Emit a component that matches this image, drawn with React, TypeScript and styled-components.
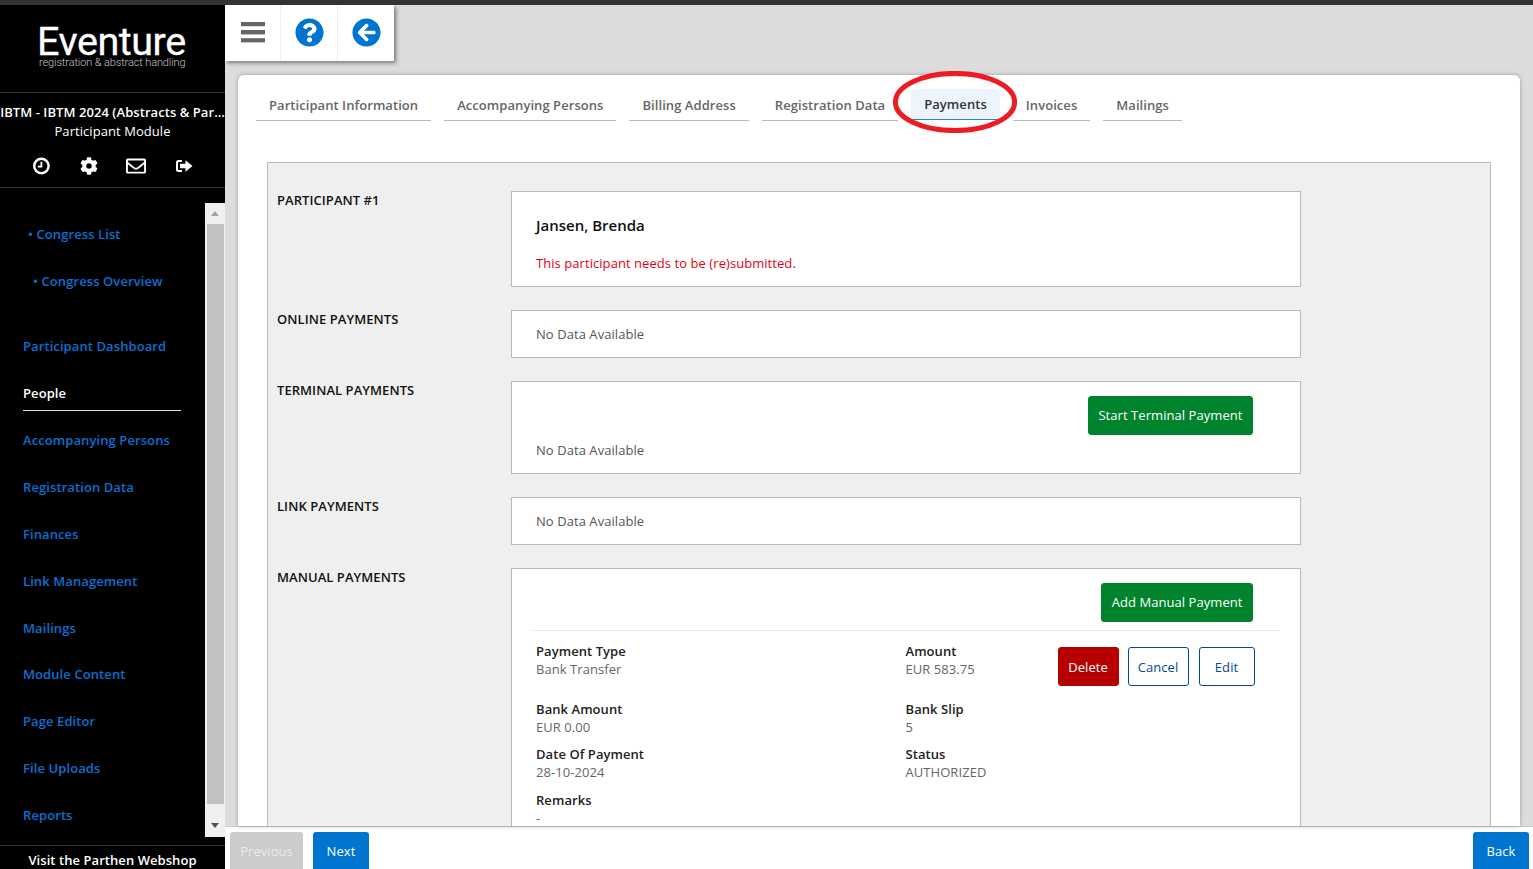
import React from "react";
import styled, { createGlobalStyle } from "styled-components";
import { FaQuestionCircle, FaArrowCircleLeft, FaCog, FaRegEnvelope } from "react-icons/fa";

const Global = createGlobalStyle`
  html, body { margin: 0; padding: 0; height: 100%; overflow: hidden; }
  body { font-family: "Open Sans", "Liberation Sans", sans-serif; font-size: 13px; letter-spacing: .06px; color: #222; background: #ddd; }
  * { box-sizing: border-box; }
`;

const Page = styled.div`
  height: 869px; display: flex; border-top: 5px solid #333; background: #dcdcdc; overflow: hidden;
`;
const Sidebar = styled.aside`
  width: 225px; flex: none; background: #000; color: #fff; display: flex; flex-direction: column;
`;
const Logo = styled.div`
  height: 88px; flex: none; border-bottom: 1px solid #333; padding: 21px 0 0 39px; display: flex; flex-direction: column;
`;
const LogoName = styled.div`
  font-family: Roboto, sans-serif; font-size: 39.5px; line-height: 31px; letter-spacing: -0.45px; color: #fff; margin-left: -2px; -webkit-text-stroke: .3px #fff;
`;
const LogoTag = styled.div`
  font-family: Roboto, sans-serif; font-weight: 300; font-size: 11px; line-height: 12px; color: #c4c4c4; letter-spacing: -0.12px;
`;
const EventBlock = styled.div`
  height: 95px; flex: none; border-bottom: 1px solid #333; padding-top: 10px; text-align: center;
`;
const EventName = styled.div` font-weight: 600; line-height: 19px; white-space: nowrap; `;
const ModuleName = styled.div` line-height: 19px; `;
const QuickIcons = styled.div`
  display: flex; justify-content: center; align-items: center; gap: 27.5px; margin-top: 15px; height: 20px; padding-right: .5px;
  svg { display: block; width: 20px; }
`;
const NavArea = styled.div` margin-top: 15px; height: 634px; flex: none; display: flex; `;
const NavList = styled.nav` flex: 1; padding-top: 8px; min-width: 0; `;
const NavItem = styled.a<{ $indent?: number; $gapAfter?: number; $active?: boolean }>`
  display: block; height: 47px; line-height: 47px; padding-left: ${p => p.$indent ?? 23}px; font-weight: 600; white-space: nowrap; letter-spacing: .09px;
  color: ${p => (p.$active ? "#fff" : "#0a6fd0")};
  margin-bottom: ${p => p.$gapAfter ?? 0}px;
  position: relative;
  ${p => p.$active && `&::after { content: ""; position: absolute; left: 23px; width: 158px; bottom: 6px; height: 1px; background: #ddd; }`}
`;
const Track = styled.div`
  width: 20px; flex: none; background: #f0f0f0; display: flex; flex-direction: column; align-items: center; padding-bottom: 1px;
`;
const Arrow = styled.div<{ $down?: boolean }>`
  height: 21px; flex: none; display: flex; align-items: center; justify-content: center;
  &::before { content: ""; border-left: 4.5px solid transparent; border-right: 4.5px solid transparent;
    ${p => p.$down ? "border-top: 5px solid #505050;" : "border-bottom: 5px solid #a3a3a3;"} }
`;
const Thumb = styled.div` width: 17px; flex: 1; background: #c1c1c1; margin-bottom: 11px; `;
const SideFooter = styled.div`
  margin-top: 8px; border-top: 1px solid #333; flex: 1; text-align: center; font-weight: 600; line-height: 28px; white-space: nowrap;
`;

const Main = styled.main` flex: 1; min-width: 0; display: flex; flex-direction: column; position: relative; `;
const Toolbar = styled.div`
  width: 169px; height: 56px; flex: none; background: #fff; display: flex; box-shadow: 2px 2px 4px rgba(0,0,0,.45);
`;
const ToolButton = styled.div<{ $w: number; $color: string }>`
  width: ${p => p.$w}px; display: flex; align-items: center; justify-content: center; color: ${p => p.$color};
  border-right: 1px solid #f0f0f0; padding-bottom: 2px;
  &:last-child { border-right: 0; }
  svg { display: block; }
`;
const Card = styled.section`
  margin: 14px 13px 0; flex: 1; min-height: 0; background: #fff; border-radius: 6px 6px 0 0; box-shadow: 0 0 4px rgba(0,0,0,.3); position: relative; display: flex;
`;
const CardBody = styled.div` flex: 1; min-width: 0; padding: 14px 18px 0; overflow: hidden; `;
const Tabs = styled.div` display: flex; gap: 13px; height: 32px; `;
const Tab = styled.div<{ $active?: boolean }>`
  padding: 0 13px; white-space: nowrap; font-weight: 600; color: ${p => p.$active ? "#333" : "#666"};
  height: ${p => p.$active ? 31 : 32}px;
  line-height: ${p => p.$active ? "30px" : "32px"};
  border-bottom: 1px solid ${p => p.$active ? "#2a7fd4" : "#bbb"};
  background: ${p => p.$active ? "#edf4fb" : "transparent"};
  border-radius: ${p => p.$active ? "5px 5px 0 0" : "0"};
`;
const Circle = styled.svg` position: absolute; left: 655px; top: -4px; `;
const Panel = styled.div`
  margin: 41px 11px 0 11px; background: #efefef; border: 1px solid #bbb; border-bottom: 0; padding: 28px 0 0 9px;
  display: grid; grid-template-columns: 234px 790px; row-gap: 23px;
`;
const SectionLabel = styled.div` font-weight: 600; color: #111; line-height: 18px; `;
const Box = styled.div<{ $h?: number }>`
  background: #fff; border: 1px solid #bbb; padding: 0 24px; ${p => p.$h ? `height: ${p.$h}px;` : ""}
`;
const Name = styled.div` font-size: 15px; letter-spacing: 0; font-weight: 600; color: #111; line-height: 20px; margin-top: 23px; `;
const Warning = styled.div` color: #e60012; line-height: 18px; margin-top: 19px; `;
const Empty = styled.div` color: #555; line-height: 18px; `;
const EmptyBox = styled(Box)` padding-top: 14px; `;
const ButtonRow = styled.div`
  display: flex; justify-content: flex-end; padding: 14px 23px 0 0; margin-bottom: 6px;
`;
const Button = styled.button<{ $bg?: string; $line?: boolean; $w?: number }>`
  font: inherit; letter-spacing: inherit; height: 39px; border-radius: 3px; cursor: pointer; white-space: nowrap;
  padding: 0 ${p => p.$w ? 0 : 9.5}px;
  ${p => p.$w ? `width: ${p.$w}px;` : ""}
  background: ${p => p.$line ? "#fff" : p.$bg}; color: ${p => p.$line ? "#004a94" : "#fff"};
  border: 1px solid ${p => p.$line ? "#004a94" : p.$bg};
`;
const GreenButton = styled(Button)` background: #00832d; border-color: #00832d; padding-bottom: 2px; `;
const EditButton = styled(Button)` margin-left: 1px; `;
const Divider = styled.div` height: 1px; background: #e9e9e9; margin: 8px -4px 0 -5px; `;
const Details = styled.div`
  display: grid; grid-template-columns: 369.5px 152px auto; margin-top: 11px;
`;
const Field = styled.div<{ $h: number; $wide?: boolean }>`
  min-height: ${p => p.$h}px; line-height: 18px;
  ${p => p.$wide ? "grid-column: 2 / 4;" : ""}
`;
const FieldLabel = styled.div` font-weight: 600; color: #222; `;
const FieldValue = styled.div` color: #666; `;
const Actions = styled.div` grid-row: 1; grid-column: 3; display: flex; gap: 9px; padding-top: 5px; align-items: flex-start; `;
const Footer = styled.footer`
  height: 43px; flex: none; background: #fff; border-top: 1px solid #ccc; padding: 5px 4px 0 5px; display: flex; gap: 10px; overflow: hidden;
`;
const FootButton = styled.button<{ $off?: boolean; $end?: boolean; $w: number }>`
  font: inherit; letter-spacing: inherit; border: 0; height: 38px; width: ${p => p.$w}px; border-radius: 3px 3px 0 0; padding: 0;
  background: ${p => p.$off ? "#ccc" : "#0075cf"}; color: ${p => p.$off ? "#eaeaea" : "#fff"};
  ${p => p.$end ? "margin-left: auto;" : ""}
`;

const nav = ["Accompanying Persons", "Registration Data", "Finances", "Link Management", "Mailings", "Module Content", "Page Editor", "File Uploads", "Reports"];
const tabs = ["Participant Information", "Accompanying Persons", "Billing Address", "Registration Data", "Payments", "Invoices", "Mailings"];

export default function App() {
  return (
    <Page>
      <Global />
      <Sidebar>
        <Logo>
          <LogoName>Eventure</LogoName>
          <LogoTag>registration &amp; abstract handling</LogoTag>
        </Logo>
        <EventBlock>
          <EventName>IBTM - IBTM 2024 (Abstracts &amp; Par…</EventName>
          <ModuleName>Participant Module</ModuleName>
          <QuickIcons>
            <svg width="20" height="18" viewBox="0 0 20 18" fill="none" stroke="#fff">
              <circle cx="10.4" cy="9" r="7.2" strokeWidth="2.4" />
              <path d="M10.4 4.8V9.6H6.8" strokeWidth="1.8" />
            </svg>
            <FaCog size={18} color="#fff" />
            <FaRegEnvelope size={20} color="#fff" />
            <svg width="20" height="18" viewBox="0 0 20 18" fill="#fff">
              <path d="M8 3H4.5A2.5 2.5 0 0 0 2 5.5v7A2.5 2.5 0 0 0 4.5 15H8v-1.9H4.8a.8.8 0 0 1-.8-.8V5.7a.8.8 0 0 1 .8-.8H8z" />
              <path d="M6 6.8h5.5V3.2L18.5 9l-7 5.8v-3.6H6z" />
            </svg>
          </QuickIcons>
        </EventBlock>
        <NavArea>
          <NavList>
            <NavItem $indent={28}>• Congress List</NavItem>
            <NavItem $indent={33} $gapAfter={18}>• Congress Overview</NavItem>
            <NavItem>Participant Dashboard</NavItem>
            <NavItem $active>People</NavItem>
            {nav.map(n => <NavItem key={n} $gapAfter={n === "Mailings" ? -1 : 0}>{n}</NavItem>)}
          </NavList>
          <Track>
            <Arrow />
            <Thumb />
            <Arrow $down />
          </Track>
        </NavArea>
        <SideFooter>Visit the Parthen Webshop</SideFooter>
      </Sidebar>
      <Main>
        <Toolbar>
          <ToolButton $w={56} $color="#666">
            <svg width="24" height="21" viewBox="0 0 24 21" fill="currentColor">
              <rect x="0" y="0" width="24" height="4.2" />
              <rect x="0" y="8" width="24" height="4.4" />
              <rect x="0" y="16.2" width="24" height="4.2" />
            </svg>
          </ToolButton>
          <ToolButton $w={57} $color="#0075cf"><FaQuestionCircle size={29} /></ToolButton>
          <ToolButton $w={56} $color="#0075cf"><FaArrowCircleLeft size={29} /></ToolButton>
        </Toolbar>
        <Card>
          <CardBody>
            <Tabs>
              {tabs.map(t => <Tab key={t} $active={t === "Payments"}>{t}</Tab>)}
            </Tabs>
            <Panel>
              <SectionLabel>PARTICIPANT #1</SectionLabel>
              <Box $h={96}>
                <Name>Jansen, Brenda</Name>
                <Warning>This participant needs to be (re)submitted.</Warning>
              </Box>
              <SectionLabel>ONLINE PAYMENTS</SectionLabel>
              <EmptyBox $h={48}><Empty>No Data Available</Empty></EmptyBox>
              <SectionLabel>TERMINAL PAYMENTS</SectionLabel>
              <Box $h={93}>
                <ButtonRow><GreenButton>Start Terminal Payment</GreenButton></ButtonRow>
                <Empty>No Data Available</Empty>
              </Box>
              <SectionLabel>LINK PAYMENTS</SectionLabel>
              <EmptyBox $h={48}><Empty>No Data Available</Empty></EmptyBox>
              <SectionLabel>MANUAL PAYMENTS</SectionLabel>
              <Box>
                <ButtonRow><GreenButton>Add Manual Payment</GreenButton></ButtonRow>
                <Divider />
                <Details>
                  <Field $h={58}><FieldLabel>Payment Type</FieldLabel><FieldValue>Bank Transfer</FieldValue></Field>
                  <Field $h={58}><FieldLabel>Amount</FieldLabel><FieldValue>EUR 583.75</FieldValue></Field>
                  <Actions>
                    <Button $bg="#b70000" $w={61}>Delete</Button>
                    <Button $line $w={61}>Cancel</Button>
                    <EditButton $line $w={56}>Edit</EditButton>
                  </Actions>
                  <Field $h={45}><FieldLabel>Bank Amount</FieldLabel><FieldValue>EUR 0.00</FieldValue></Field>
                  <Field $h={45} $wide><FieldLabel>Bank Slip</FieldLabel><FieldValue>5</FieldValue></Field>
                  <Field $h={46}><FieldLabel>Date Of Payment</FieldLabel><FieldValue>28-10-2024</FieldValue></Field>
                  <Field $h={46} $wide><FieldLabel>Status</FieldLabel><FieldValue>AUTHORIZED</FieldValue></Field>
                  <Field $h={45}><FieldLabel>Remarks</FieldLabel><FieldValue>-</FieldValue></Field>
                </Details>
              </Box>
            </Panel>
          </CardBody>
          <Circle width="124" height="62" viewBox="0 0 124 62" fill="none">
            <ellipse cx="62" cy="31" rx="59.6" ry="28.6" stroke="#ed1c24" strokeWidth="5" />
          </Circle>
        </Card>
        <Footer>
          <FootButton $off $w={73}>Previous</FootButton>
          <FootButton $w={56}>Next</FootButton>
          <FootButton $end $w={56}>Back</FootButton>
        </Footer>
      </Main>
    </Page>
  );
}
